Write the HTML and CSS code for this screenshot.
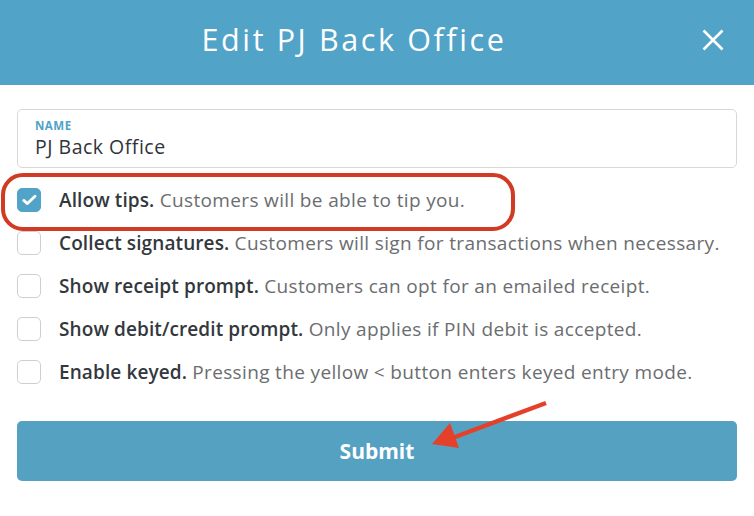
FILE: index.html
```html
<!DOCTYPE html>
<html>
<head>
<meta charset="utf-8">
<link rel="stylesheet" href="styles.css">
</head>
<body>
<div class="modal">
  <header class="header">
    <h1 class="title">Edit PJ Back Office</h1>
    <button class="close" aria-label="Close">
      <svg width="22" height="22" viewBox="0 0 22 22"><path d="M1.5 1.5 L20.5 20.5 M20.5 1.5 L1.5 20.5" stroke="#fff" stroke-width="2.6" fill="none"/></svg>
    </button>
  </header>
  <div class="body">
    <div class="field">
      <div class="field-label">NAME</div>
      <div class="field-value">PJ Back Office</div>
    </div>
    <div class="options">
      <div class="option highlighted">
        <span class="box checked">
          <svg width="15" height="12" viewBox="0 0 15 12"><path d="M1.8 6.4 L5.4 9.6 L13 2.2" stroke="#fff" stroke-width="2.8" fill="none" stroke-linecap="round" stroke-linejoin="round"/></svg>
        </span>
        <span class="text"><b>Allow tips.</b> Customers will be able to tip you.</span>
      </div>
      <div class="option">
        <span class="box"></span>
        <span class="text"><b>Collect signatures.</b> Customers will sign for transactions when necessary.</span>
      </div>
      <div class="option">
        <span class="box"></span>
        <span class="text"><b>Show receipt prompt.</b> Customers can opt for an emailed receipt.</span>
      </div>
      <div class="option">
        <span class="box"></span>
        <span class="text"><b>Show debit/credit prompt.</b> Only applies if PIN debit is accepted.</span>
      </div>
      <div class="option">
        <span class="box"></span>
        <span class="text"><b>Enable keyed.</b> Pressing the yellow &lt; button enters keyed entry mode.</span>
      </div>
    </div>
    <div class="submit-wrap">
      <button class="submit">Submit</button>
      <svg class="arrow" width="160" height="70" viewBox="400 390 160 70">
        <path d="M546 402 L447 439" stroke="#E5412A" stroke-width="4.5" fill="none"/>
        <path d="M432 443 L450 422 L459 447 Z" fill="#E5412A"/>
      </svg>
    </div>
  </div>
</div>
</body>
</html>
```
FILE: styles.css
```css
* { box-sizing: border-box; }
html, body { margin: 0; padding: 0; background: #fff; }
body { font-family: "Open Sans", "Noto Sans", sans-serif; color: #33383d; }
.modal { width: 754px; }
.header {
  height: 85px;
  background: #52A3C8;
  display: flex;
  align-items: center;
  justify-content: center;
  position: relative;
  padding-right: 46px;
}
.title {
  margin: 0;
  font-family: "Open Sans", sans-serif;
  font-weight: 400;
  font-size: 30.5px;
  color: #fff;
  letter-spacing: 2.6px;
  padding-bottom: 8px;
}
.close {
  position: absolute;
  right: 30px;
  top: 29px;
  background: none;
  border: 0;
  padding: 0;
  width: 22px;
  height: 22px;
}
.close svg { display: block; }
.body { padding: 24px 17px 0 17px; }
.field {
  height: 59px;
  border: 1px solid #d8d8d8;
  border-radius: 5px;
  padding: 9px 17px 0 17px;
}
.field-label {
  font-size: 11.5px;
  font-weight: 700;
  color: #4FA3C7;
  letter-spacing: 0.5px;
  line-height: 14px;
}
.field-value {
  font-size: 19.5px;
  color: #2f343a;
  line-height: 26px;
  margin-top: 1px;
  letter-spacing: 0.5px;
}
.options { margin-top: 20px; display: flex; flex-direction: column; gap: 19px; }
.option {
  display: flex;
  align-items: center;
  gap: 18px;
  height: 24px;
  position: relative;
}
.option.highlighted::before {
  content: "";
  position: absolute;
  left: -16px;
  top: -15px;
  width: 506px;
  height: 50px;
  border: 4px solid #D13B23;
  border-radius: 22px;
}
.box {
  width: 24px;
  height: 24px;
  flex: none;
  border: 1px solid #cfcfcf;
  border-radius: 5px;
  display: flex;
  align-items: center;
  justify-content: center;
  background: #fff;
}
.box.checked { background: #52A3C8; border-color: #52A3C8; }
.text { font-size: 19px; letter-spacing: 0.35px; color: #6b6d70; white-space: nowrap; }
.text b { color: #33383d; font-weight: 600; letter-spacing: 0.1px; }
.submit-wrap { margin-top: 37px; position: relative; }
.submit {
  width: 100%;
  height: 60px;
  border: 0;
  border-radius: 5px;
  background: #55A1C1;
  color: #fff;
  font-family: "Open Sans", sans-serif;
  font-weight: 700;
  font-size: 21px;
}
.arrow { position: absolute; left: 383px; top: -30px; }
```
